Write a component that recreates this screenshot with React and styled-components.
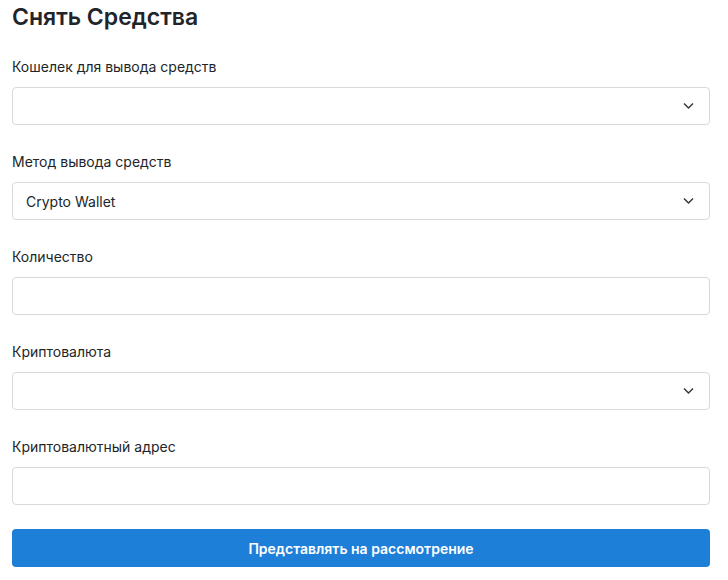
import React from "react";
import styled, { createGlobalStyle } from "styled-components";

const Global = createGlobalStyle`
  html, body { margin: 0; padding: 0; background: #fff; }
  body { font-family: Inter, "Noto Sans", sans-serif; color: #212529; }
  * { box-sizing: border-box; }
`;

const Page = styled.div`
  padding: 3px 18px 0 12px;
  display: flex;
  flex-direction: column;
`;

const Title = styled.h2`
  margin: 0 0 26px;
  font-size: 23px;
  font-weight: 600;
  line-height: 28px;
  color: #212529;
`;

const Form = styled.div`
  display: flex;
  flex-direction: column;
  gap: 27px;
`;

const Field = styled.div`
  display: flex;
  flex-direction: column;
`;

const Label = styled.label`
  font-size: 14px;
  line-height: 20px;
  margin-bottom: 10px;
  color: #212529;
`;

const Box = styled.div`
  position: relative;
  height: 38px;
  border: 1px solid #d7d9dc;
  border-radius: 4px;
  display: flex;
  align-items: center;
  padding: 0 13px;
  font-size: 14px;
  color: #212529;
  background: #fff;
`;

const Chevron = styled.svg`
  position: absolute;
  right: 15px;
  top: 50%;
  transform: translateY(-50%);
`;

const Button = styled.button`
  margin-top: 24px;
  height: 38px;
  border: none;
  border-radius: 4px;
  background: #1e7fd9;
  color: #fff;
  font-family: Inter, "Noto Sans", sans-serif;
  font-size: 14px;
  font-weight: 600;
`;

const Arrow = () => (
  <Chevron width="11" height="7" viewBox="0 0 11 7">
    <path d="M1 1 L5.5 5.5 L10 1" fill="none" stroke="#343a40" strokeWidth="1.5" />
  </Chevron>
);

const fields = [
  { label: "Кошелек для вывода средств", select: true, value: "" },
  { label: "Метод вывода средств", select: true, value: "Crypto Wallet" },
  { label: "Количество", select: false, value: "" },
  { label: "Криптовалюта", select: true, value: "" },
  { label: "Криптовалютный адрес", select: false, value: "" },
];

export default function App() {
  return (
    <>
      <Global />
      <Page>
        <Title>Снять Средства</Title>
        <Form>
          {fields.map((f) => (
            <Field key={f.label}>
              <Label>{f.label}</Label>
              <Box>
                {f.value}
                {f.select && <Arrow />}
              </Box>
            </Field>
          ))}
        </Form>
        <Button>Представлять на рассмотрение</Button>
      </Page>
    </>
  );
}
